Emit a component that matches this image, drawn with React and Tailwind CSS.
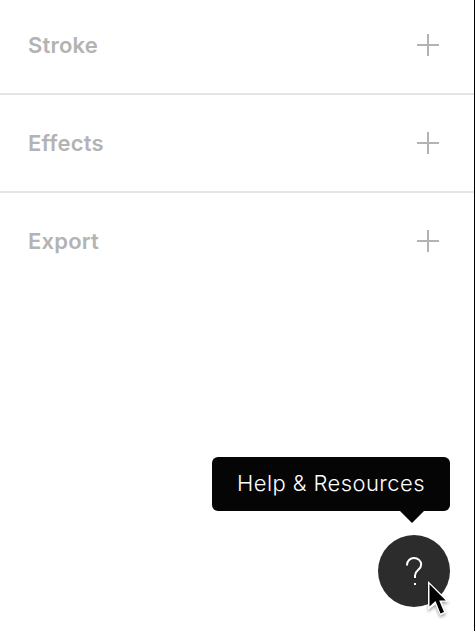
const sections = ["Stroke", "Effects", "Export"];

function PlusIcon() {
  return (
    <svg width="22" height="22" viewBox="0 0 22 22" fill="#b3b3b3" shapeRendering="crispEdges">
      <rect x="10" y="0" width="2" height="22" />
      <rect x="0" y="10" width="22" height="2" />
    </svg>
  );
}

function Section({ title }) {
  return (
    <section className="flex h-[98px] items-center justify-between border-b-2 border-[#e5e5e5] pr-[35px] pl-7 last:border-transparent">
      <h2 className="text-[22px] leading-7 font-semibold tracking-[0.2px] text-[#b3b3b3]">{title}</h2>
      <button type="button" aria-label="Add">
        <PlusIcon />
      </button>
    </section>
  );
}

function Cursor() {
  return (
    <svg
      className="absolute top-[44px] left-[48px] drop-shadow-[0_2px_1.5px_rgba(0,0,0,0.35)]"
      width="26"
      height="40"
      viewBox="0 0 26 40"
    >
      <path d="M2 2L23 22.7H15.6L19.8 33.8L14.2 36.5L9.4 25.6L2 31Z" fill="#fff" />
      <path d="M3.5 5.2V27.4L9.5 22L14.5 34.4L18 32.9L13.2 21.4H19.8Z" fill="#000" />
    </svg>
  );
}

export default function App() {
  return (
    <main className="flex h-[631px] w-[475px] flex-col overflow-hidden border-r border-black bg-white font-['Inter',sans-serif]">
      <div className="-mt-[3px]">
        {sections.map((title) => (
          <Section key={title} title={title} />
        ))}
      </div>
      <div className="mt-auto mr-6 mb-6 flex flex-col items-end">
        <div className="relative mb-6 flex h-[54px] w-[238px] items-center justify-center rounded-[6px] bg-[#050505] pb-0.5">
          <span className="text-[22px] leading-7 font-[350] tracking-[0.42px] whitespace-nowrap text-white">
            Help &amp; Resources
          </span>
          <svg className="absolute top-full right-[26px]" width="24" height="12" viewBox="0 0 24 12">
            <path d="M0 0H24L12 12Z" fill="#050505" />
          </svg>
        </div>
        <button
          type="button"
          aria-label="Help"
          className="relative flex size-[72px] items-center justify-center rounded-full bg-[#2c2c2c]"
        >
          <svg width="18" height="30" viewBox="0 0 18 30" fill="none">
            <path
              d="M2 9.5V9C2 4.8 5.1 2 9 2S16.2 4.8 16.2 8.6C16.2 14.2 10 14 10 19.5V22"
              stroke="#fff"
              strokeWidth="2"
            />
            <path d="M9 27H11V29H9Z" fill="#fff" />
          </svg>
          <Cursor />
        </button>
      </div>
    </main>
  );
}
